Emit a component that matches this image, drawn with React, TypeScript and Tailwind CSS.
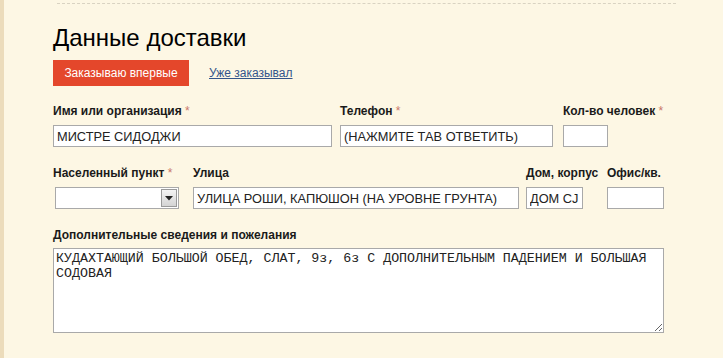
const Star = () => <span className="text-[#c9766a] font-normal"> *</span>;

const inputCls =
  "h-[22px] border border-[#a9a9a9] bg-white px-[3px] text-[12.8px] font-normal text-[#222] outline-none font-['Liberation_Sans',Arial,sans-serif]";

export default function App() {
  return (
    <div className="w-[723px] h-[358px] overflow-hidden bg-[#fdf7e4] border-l-[4px] border-[#ecdcbb] font-['Liberation_Sans',Arial,sans-serif] text-[#1a1a1a]">
      <div className="ml-[53px] w-[619px] border-t border-dashed border-[#d9d3c2] mt-[3px]" />
      <div className="pl-[49px] pt-[20px]">
        <h1 className="text-[24px] leading-[28px] text-black">Данные доставки</h1>
        <div className="mt-[8px] flex items-center gap-[20px]">
          <button className="h-[26px] w-[136px] bg-[#e4472b] text-white text-[12px]">Заказываю впервые</button>
          <a href="#" className="text-[12px] text-[#34558b] underline">Уже заказывал</a>
        </div>

        <div className="mt-[17px] flex text-[12px] font-bold">
          <div className="w-[287px]">
            <div className="h-[16px] leading-[16px]">Имя или организация<Star /></div>
            <input className={inputCls + " mt-[6px] w-[279px]"} defaultValue="МИСТРЕ СИДОДЖИ" />
          </div>
          <div className="w-[223px]">
            <div className="h-[16px] leading-[16px]">Телефон<Star /></div>
            <input className={inputCls + " mt-[6px] w-[213px]"} defaultValue="(НАЖМИТЕ ТАВ ОТВЕТИТЬ)" />
          </div>
          <div>
            <div className="h-[16px] leading-[16px]">Кол-во человек<Star /></div>
            <input className={inputCls + " mt-[6px] w-[45px]"} defaultValue="" />
          </div>
        </div>

        <div className="mt-[18px] flex text-[12px] font-bold">
          <div className="w-[140px]">
            <div className="h-[16px] leading-[16px]">Населенный пункт<Star /></div>
            <div className="mt-[6px] ml-[2px] flex h-[22px] w-[124px] border border-[#a9a9a9] bg-white">
              <div className="flex-1" />
              <div className="m-[1px] flex w-[16px] items-center justify-center border border-[#9a9a9a] bg-gradient-to-b from-[#f4f4f4] to-[#d4d4d4]">
                <svg width="8" height="5" viewBox="0 0 8 5"><path d="M0 0h8L4 4.5z" fill="#222" /></svg>
              </div>
            </div>
          </div>
          <div className="w-[333px]">
            <div className="h-[16px] leading-[16px]">Улица</div>
            <input className={inputCls + " mt-[6px] w-[326px]"} defaultValue="УЛИЦА РОШИ, КАПЮШОН (НА УРОВНЕ ГРУНТА)" />
          </div>
          <div className="w-[81px]">
            <div className="h-[16px] leading-[16px]">Дом, корпус</div>
            <input className={inputCls + " mt-[6px] w-[57px]"} defaultValue="ДОМ CJ" />
          </div>
          <div>
            <div className="h-[16px] leading-[16px]">Офис/кв.</div>
            <input className={inputCls + " mt-[6px] w-[57px]"} defaultValue="" />
          </div>
        </div>

        <div className="mt-[18px] text-[12px] font-bold">
          <div className="h-[16px] leading-[16px]">Дополнительные сведения и пожелания</div>
          <textarea
            className="mt-[5px] block h-[85px] w-[611px] border border-[#a9a9a9] bg-white px-[2px] py-[2px] text-[13.3px] leading-[15px] font-normal text-[#222] outline-none font-['Liberation_Mono','Courier_New',monospace]"
            defaultValue="КУДАХТАЮЩИЙ БОЛЬШОЙ ОБЕД, СЛАТ, 9з, 6з С ДОПОЛНИТЕЛЬНЫМ ПАДЕНИЕМ И БОЛЬШАЯ СОДОВАЯ"
          />
        </div>
      </div>
    </div>
  );
}
